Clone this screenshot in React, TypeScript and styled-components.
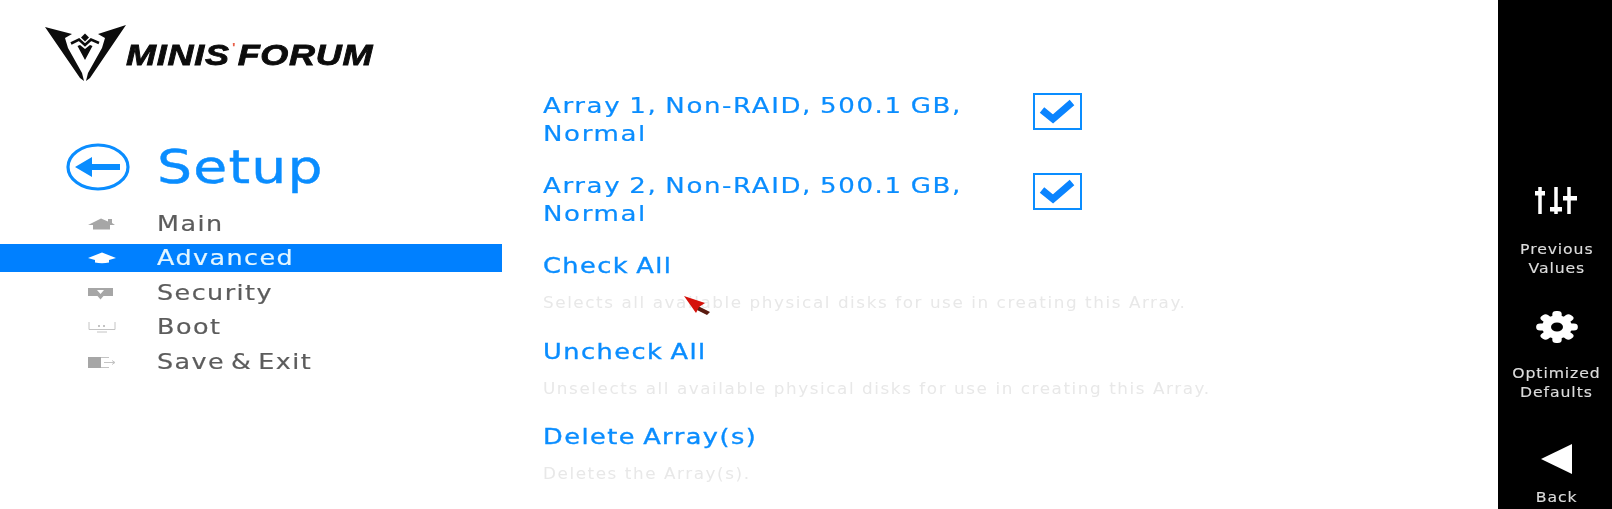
import styled, { createGlobalStyle } from "styled-components";

const GlobalStyle = createGlobalStyle`
  html, body {
    margin: 0;
    padding: 0;
    background: #fff;
  }
  body {
    font-family: "DejaVu Sans", "Liberation Sans", sans-serif;
  }
`;

const BLUE = "#0a8dff";

const Page = styled.div`
  position: relative;
  display: flex;
  width: 1612px;
  height: 509px;
  overflow: hidden;
  background: #fff;
`;

const Sidebar = styled.aside`
  width: 502px;
  flex: none;
  filter: blur(0.5px);
`;

const LogoArea = styled.div`
  display: flex;
  align-items: flex-start;
  height: 143px;
  padding: 25px 0 0 44px;
  box-sizing: border-box;
`;

const WordMark = styled.div`
  margin: 5px 0 0 -1px;
  color: #0c0c0c;
  font: italic 700 29px/36px "Liberation Sans", sans-serif;
  -webkit-text-stroke: 0.8px #0c0c0c;
  white-space: nowrap;
  letter-spacing: 0.6px;
  transform: scaleX(1.24);
  transform-origin: left center;
`;

const Accent = styled.span`
  color: #e8604a;
  -webkit-text-stroke: 0;
  font-size: 12px;
  font-style: normal;
  vertical-align: 13px;
  margin: 0 1px 0 2px;
`;

const SetupHead = styled.div`
  display: flex;
  align-items: center;
  height: 48px;
  padding-left: 66px;
  margin-bottom: 19px;
`;

const SetupTitle = styled.h1`
  margin: 0 0 0 27px;
  color: ${BLUE};
  font-size: 46px;
  font-weight: 400;
  line-height: 48px;
  letter-spacing: 1px;
  -webkit-text-stroke: 0.4px ${BLUE};
  transform: scaleX(1.2);
  transform-origin: left center;
`;

const Menu = styled.nav`
  display: flex;
  flex-direction: column;
  gap: 6.4px;
`;

const MenuRow = styled.div<{ $active?: boolean }>`
  display: flex;
  align-items: center;
  height: 28px;
  padding-left: 88px;
  background: ${({ $active }) => ($active ? "#0080ff" : "transparent")};
  color: ${({ $active }) => ($active ? "#e4f6ff" : "#5c5c5c")};
`;

const MenuIcon = styled.svg`
  width: 28px;
  height: 16px;
  flex: none;
`;

const MenuLabel = styled.span`
  margin-left: 41px;
  font-size: 21px;
  line-height: 28px;
  letter-spacing: 1.2px;
  word-spacing: -3px;
  white-space: nowrap;
  -webkit-text-stroke: 0.2px currentColor;
  transform: scaleX(1.21);
  transform-origin: left center;
`;

const Content = styled.main`
  flex: 1;
  padding: 92px 0 0 41px;
  filter: blur(0.5px);
`;

const ArrayRow = styled.div`
  display: flex;
  align-items: flex-start;
  height: 80px;
`;

const ArrayName = styled.div`
  width: 490px;
  flex: none;
  color: ${BLUE};
  font-size: 21px;
  line-height: 28px;
  letter-spacing: 1.3px;
  word-spacing: -1.5px;
  white-space: nowrap;
  -webkit-text-stroke: 0.2px ${BLUE};
  transform: scaleX(1.24);
  transform-origin: left center;
`;

const CheckBox = styled.div`
  display: flex;
  align-items: center;
  justify-content: center;
  width: 49px;
  height: 37px;
  margin-top: 1px;
  box-sizing: border-box;
  border: 2px solid ${BLUE};
`;

const ActionList = styled.div`
  display: flex;
  flex-direction: column;
`;

const Action = styled.div`
  height: 85.5px;
`;

const ActionTitle = styled.div`
  color: ${BLUE};
  font-size: 21px;
  line-height: 28px;
  letter-spacing: 1.2px;
  word-spacing: -2px;
  white-space: nowrap;
  -webkit-text-stroke: 0.35px ${BLUE};
  transform: scaleX(1.22);
  transform-origin: left center;
`;

const ActionHelp = styled.div`
  margin-top: 13px;
  color: #e8e8e8;
  font-size: 15px;
  line-height: 20px;
  letter-spacing: 1.4px;
  white-space: nowrap;
  transform: scaleX(1.12);
  transform-origin: left center;
`;

const Rail = styled.aside`
  display: flex;
  flex-direction: column;
  align-items: center;
  width: 114px;
  flex: none;
  padding: 186px 0 0 3px;
  box-sizing: border-box;
  background: #000;
  filter: blur(0.4px);
`;

const RailItem = styled.div<{ $height: number }>`
  display: flex;
  flex-direction: column;
  align-items: center;
  height: ${({ $height }) => $height}px;
`;

const RailIcon = styled.svg<{ $top?: number }>`
  flex: none;
  margin-top: ${({ $top }) => $top ?? 0}px;
`;

const RailLabel = styled.div<{ $top: number }>`
  margin-top: ${({ $top }) => $top}px;
  color: #dcdcdc;
  font-size: 14px;
  line-height: 19px;
  letter-spacing: 0.8px;
  text-align: center;
  white-space: nowrap;
  -webkit-text-stroke: 0.15px #dcdcdc;
  transform: scaleX(1.12);
`;

const Cursor = styled.svg`
  position: absolute;
  left: 684px;
  top: 296px;
  width: 27px;
  height: 19px;
`;

const Tick = () => (
  <svg width="37" height="25" viewBox="0 0 37 25">
    <path d="M3 11 L14 20 L33 3.5" fill="none" stroke="#0a84ff" strokeWidth="7" />
  </svg>
);

const icons = {
  home: (
    <path d="M0 9 L13 2.5 L20 5.5 L20 3 L24 3 L24 7 L27 9 L22 9 L22 13.5 L5 13.5 L5 9 Z" fill="#a6a6a6" />
  ),
  cap: (
    <path d="M0 8 L14 2.5 L28 8 L21 10 L21 12.5 Q14 14 7 12.5 L7 10 Z" fill="#ffffff" />
  ),
  shield: (
    <path d="M0 3 L25 3 L25 11 L15.5 11 L12.5 14.5 L9.5 11 L0 11 Z M9 5 L16 5 L12.5 9 Z" fill="#a6a6a6" fillRule="evenodd" />
  ),
  boot: (
    <>
      <path d="M1 3 L1 10.5 L27 10.5 L27 3 M9 13 L19 13" fill="none" stroke="#c4c4c4" strokeWidth="1" />
      <path d="M10 6 h2 v2 h-2 Z M15 6 h2 v2 h-2 Z" fill="#c4c4c4" />
    </>
  ),
  save: (
    <>
      <path d="M0 3 L13 3 L13 14 L0 14 Z" fill="#a6a6a6" />
      <path d="M13 3.5 L21 3.5 M13 13.5 L21 13.5 M16 8.5 L27 8.5 M24 6.5 L27 8.5 L24 10.5" stroke="#c4c4c4" strokeWidth="1" fill="none" />
    </>
  ),
};

const menu = [
  { label: "Main", icon: icons.home },
  { label: "Advanced", icon: icons.cap, active: true },
  { label: "Security", icon: icons.shield },
  { label: "Boot", icon: icons.boot },
  { label: "Save & Exit", icon: icons.save },
];

const actions = [
  { title: "Check All", help: "Selects all available physical disks for use in creating this Array." },
  { title: "Uncheck All", help: "Unselects all available physical disks for use in creating this Array." },
  { title: "Delete Array(s)", help: "Deletes the Array(s)." },
];

const App = () => {
  return (
    <Page>
      <GlobalStyle />
      <Sidebar>
        <LogoArea>
          <svg width="83" height="56" viewBox="0 0 83 56">
            <path d="M1 2 L28 9 L21 13 L24 23 L38 48 L40 56 L36 53 Z" fill="#0c0c0c" />
            <path d="M82 0 L54 9 L61 13 L58 23 L44 48 L42 56 L46 53 Z" fill="#0c0c0c" />
            <path d="M41 8.5 L45 12.5 L41 16.5 L37 12.5 Z" fill="#0c0c0c" />
            <path d="M27 18.5 L35 14.5 L41 20 L47 14.5 L55 18" fill="none" stroke="#0c0c0c" strokeWidth="2.6" />
            <path d="M33.5 21 L36 20 L41 24 L46 20 L48.5 21 L41 35 Z" fill="#0c0c0c" />
          </svg>
          <WordMark>
            MINIS<Accent>'</Accent>FORUM
          </WordMark>
        </LogoArea>
        <SetupHead>
          <svg width="64" height="48" viewBox="0 0 64 48">
            <ellipse cx="32" cy="24" rx="30" ry="22" fill="none" stroke={BLUE} strokeWidth="3.2" />
            <path d="M9 24 L26 14 L26 21 L54 21 L54 27 L26 27 L26 34 Z" fill={BLUE} />
          </svg>
          <SetupTitle>Setup</SetupTitle>
        </SetupHead>
        <Menu>
          {menu.map((item) => (
            <MenuRow key={item.label} $active={item.active}>
              <MenuIcon viewBox="0 0 28 16">{item.icon}</MenuIcon>
              <MenuLabel>{item.label}</MenuLabel>
            </MenuRow>
          ))}
        </Menu>
      </Sidebar>
      <Content>
        <ArrayRow>
          <ArrayName>
            Array 1, Non-RAID, 500.1 GB,
            <br />
            Normal
          </ArrayName>
          <CheckBox>
            <Tick />
          </CheckBox>
        </ArrayRow>
        <ArrayRow>
          <ArrayName>
            Array 2, Non-RAID, 500.1 GB,
            <br />
            Normal
          </ArrayName>
          <CheckBox>
            <Tick />
          </CheckBox>
        </ArrayRow>
        <ActionList>
          {actions.map((a) => (
            <Action key={a.title}>
              <ActionTitle>{a.title}</ActionTitle>
              <ActionHelp>{a.help}</ActionHelp>
            </Action>
          ))}
        </ActionList>
      </Content>
      <Rail>
        <RailItem $height={118}>
          <RailIcon width="42" height="28" viewBox="0 0 42 28">
            <path d="M5 1 L5 28 M21 1 L21 28 M34 1 L34 28" stroke="#fff" strokeWidth="3.5" fill="none" />
            <path d="M0 5 h10 v4.5 h-10 Z M15 21 h12 v4.5 h-12 Z M28 10 h14 v4.5 h-14 Z" fill="#fff" />
          </RailIcon>
          <RailLabel $top={26}>
            Previous
            <br />
            Values
          </RailLabel>
        </RailItem>
        <RailItem $height={140}>
          <RailIcon width="42" height="32" viewBox="-21 -16 42 32" $top={7}>
            <g transform="scale(1.3 1)" fill="#fff">
              <circle r="11.5" />
              {[0, 45, 90, 135].map((a) => (
                <rect key={a} x="-3.6" y="-16" width="7.2" height="32" rx="3" transform={`rotate(${a})`} />
              ))}
            </g>
            <ellipse rx="6" ry="4.5" fill="#000" />
          </RailIcon>
          <RailLabel $top={21}>
            Optimized
            <br />
            Defaults
          </RailLabel>
        </RailItem>
        <RailItem $height={60}>
          <RailIcon width="31" height="30" viewBox="0 0 31 30">
            <path d="M0 15 L31 0 L31 30 Z" fill="#fff" />
          </RailIcon>
          <RailLabel $top={14}>Back</RailLabel>
        </RailItem>
      </Rail>
      <Cursor viewBox="0 0 27 19">
        <path d="M14 10 L26 16 L23 19 L11 13 Z" fill="#5a1a10" />
        <path d="M0 0 L21 7 L15 11 L12 17 Z" fill="#d5110a" />
      </Cursor>
    </Page>
  );
};

export default App;
